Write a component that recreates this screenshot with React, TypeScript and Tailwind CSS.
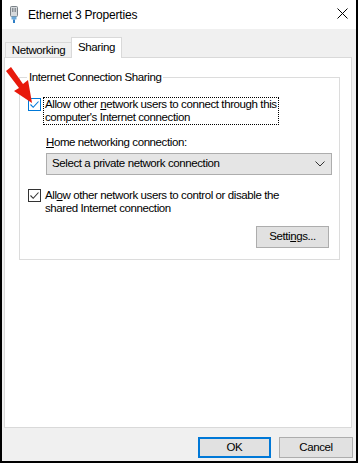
import React from "react";

const ui = { fontFamily: '"Liberation Sans", Arial, sans-serif' };

const Check = ({ blue }: { blue?: boolean }) => (
  <span
    className={`flex h-[13px] w-[13px] shrink-0 items-center justify-center border bg-white ${
      blue ? "border-[#0078d7]" : "border-[#333333]"
    }`}
  >
    <svg width="11" height="11" viewBox="0 0 11 11">
      <path d="M1.5 5.5 L4.2 8.3 L9.5 2.5" fill="none" stroke={blue ? "#0078d7" : "#333333"} strokeWidth="1.1" />
    </svg>
  </span>
);

const AdapterIcon = () => (
  <svg width="10" height="17" viewBox="0 0 10 17">
    <rect x="1.5" y="0.5" width="7" height="10" rx="1" fill="#d6d9dc" stroke="#7b8288" />
    <line x1="3.5" y1="2" x2="3.5" y2="6" stroke="#8a9096" />
    <line x1="5" y1="2" x2="5" y2="6" stroke="#8a9096" />
    <line x1="6.5" y1="2" x2="6.5" y2="6" stroke="#8a9096" />
    <rect x="2.5" y="10.5" width="5" height="3" fill="#6aa7d8" />
    <rect x="4" y="13.5" width="2" height="3.5" fill="#2f7fc6" />
  </svg>
);

const Arrow = () => (
  <svg className="absolute left-0 top-0" width="34" height="106" viewBox="0 0 34 106">
    <path d="M4 71 L9 67 L21 84 L26 80 L30 103 L12 91 L17 88 Z" fill="#e8190b" />
  </svg>
);

export default function App() {
  return (
    <div
      className="relative flex h-[463px] w-[358px] flex-col border-x-2 border-b-2 border-black bg-[#f0f0f0] text-[11.5px] tracking-[-0.4px] text-black"
      style={ui}
    >
      {/* title bar */}
      <div className="flex h-[29px] items-center bg-white">
        <span className="ml-[7px] mt-[-1px]">
          <AdapterIcon />
        </span>
        <span className="ml-[9px] text-[12px] tracking-[-0.2px]">Ethernet 3 Properties</span>
        <span className="ml-auto mr-[8px] mt-[-2px]">
          <svg width="11" height="11" viewBox="0 0 11 11">
            <path d="M0.5 0.5 L10.5 10.5 M10.5 0.5 L0.5 10.5" stroke="#000" strokeWidth="1" />
          </svg>
        </span>
      </div>

      {/* tabs */}
      <div className="mt-[8px] flex items-end pl-[3px]">
        <div className="flex h-[15px] w-[66px] items-center justify-center border-l border-t border-[#d9d9d9] pt-[1px]">
          Networking
        </div>
        <div className="relative z-10 -mb-px flex h-[21px] w-[51px] justify-center border-x border-t border-[#d9d9d9] bg-white pt-[1px]">
          Sharing
        </div>
      </div>

      {/* panel */}
      <div className="ml-[2px] mr-[4px] flex h-[371px] flex-col border border-[#d9d9d9] bg-white">
        <fieldset className="ml-[14px] mr-[11px] mt-[12px] h-[190px] border border-[#dcdcdc] px-0 pb-0">
          <legend className="ml-[7px] px-[2px] leading-[14px]">Internet Connection Sharing</legend>
          <div className="flex flex-col pl-[8px]">
            <div className="mt-[13px] flex items-start">
              <span className="mt-[1px]">
                <Check blue />
              </span>
              <span className="ml-[2px] border border-dotted border-black px-[1px] leading-[13px]">
                Allow other <span className="underline">n</span>etwork users to connect through this
                <br />
                computer's Internet connection
              </span>
            </div>
            <div className="ml-[18px] mt-[10px] leading-[14px]">
              <span className="underline">H</span>ome networking connection:
            </div>
            <div className="ml-[18px] mr-[7px] mt-[4px] flex h-[22px] items-center border border-[#adadad] bg-[#e5e5e5] pl-[5px] pr-[6px]">
              <span>Select a private network connection</span>
              <svg className="ml-auto" width="10" height="6" viewBox="0 0 10 6">
                <path d="M0.5 0.5 L5 5 L9.5 0.5" fill="none" stroke="#333" strokeWidth="1" />
              </svg>
            </div>
            <div className="mt-[14px] flex items-start">
              <Check />
              <span className="ml-[3px] pl-[1px] leading-[13px]">
                All<span className="underline">o</span>w other network users to control or disable the
                <br />
                shared Internet connection
              </span>
            </div>
            <div className="mr-[10px] mt-[11px] flex justify-end">
              <div className="flex h-[22px] w-[73px] items-center justify-center border border-[#adadad] bg-[#e1e1e1]">
                Setti<span className="underline">n</span>gs...
              </div>
            </div>
          </div>
        </fieldset>
      </div>

      {/* bottom buttons */}
      <div className="mt-[9px] flex justify-end gap-[8px] pr-[3px]">
        <div className="flex h-[21px] w-[73px] items-center justify-center border-2 border-[#0078d7] bg-[#e1e1e1]">
          OK
        </div>
        <div className="flex h-[21px] w-[74px] items-center justify-center border border-[#adadad] bg-[#e1e1e1]">
          Cancel
        </div>
      </div>

      <Arrow />
    </div>
  );
}
